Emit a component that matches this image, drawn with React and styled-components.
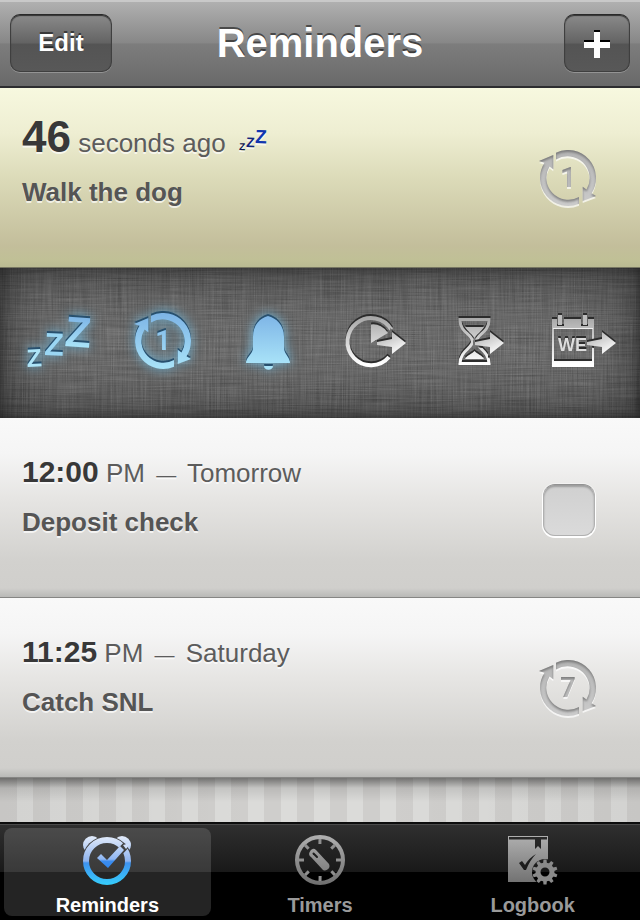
import styled, { createGlobalStyle, css } from "styled-components"

const GlobalStyle = createGlobalStyle`
  * {
    box-sizing: border-box;
  }
  body {
    margin: 0;
    background: #000;
    font-family: "Liberation Sans", Arial, Helvetica, sans-serif;
  }
  button {
    font: inherit;
    color: inherit;
    border: 0;
    padding: 0;
    background: none;
    cursor: pointer;
  }
  svg {
    display: block;
    overflow: visible;
  }
`

const Screen = styled.div`
  display: flex;
  flex-direction: column;
  min-height: 100vh;
`

const Header = styled.header`
  display: grid;
  grid-template-columns: 1fr auto 1fr;
  align-items: center;
  height: 88px;
  padding: 0 10px;
  border-bottom: 2px solid #2d2d2f;
  background: linear-gradient(#b2b2b2, #878787 50%, #7d7d7d 51%, #696969);
  box-shadow: inset 0 2px 0 #c9c9c9;
`

const Title = styled.h1`
  margin: 0;
  color: #fff;
  font-size: 40px;
  line-height: 48px;
  text-shadow: 0 -2px 0 rgba(0, 0, 0, 0.5);
`

const NavButton = styled.button`
  display: flex;
  align-items: center;
  justify-content: center;
  justify-self: ${(props) => (props.$end ? "end" : "start")};
  width: ${(props) => (props.$end ? 66 : 102)}px;
  height: 58px;
  border: 1px solid #3f3f3f;
  border-top-color: #2a2a2a;
  border-radius: 10px;
  background: linear-gradient(#8a8a8a, #636363 50%, #545454 52%, #585858);
  box-shadow:
    inset 0 1px 1px #333,
    0 1px 0 rgba(255, 255, 255, 0.25);
  color: #fff;
  font-size: 24px;
  font-weight: bold;
  text-shadow: 0 -2px 0 rgba(0, 0, 0, 0.5);
`

const List = styled.ul`
  margin: 0;
  padding: 0;
  list-style: none;
`

const Row = styled.div`
  display: flex;
  align-items: center;
  justify-content: space-between;
  min-height: 180px;
  padding: 0 36px 0 22px;
  background: linear-gradient(
    #f9f9f9,
    #f5f5f5 20%,
    #e6e5e3 45%,
    #d2d1ce 80%,
    #d0cfcc 95%,
    #b9b9b7
  );
  border-bottom: 1px solid #868684;
  ${(props) =>
    props.$due &&
    css`
      background: linear-gradient(
        #f7f8df,
        #eeeed2 25%,
        #dcdbb9 50%,
        #c3be9b 88%,
        #c0c096 96%,
        #babb92
      );
      border-bottom-color: #777762;
    `}
`

const RowText = styled.div`
  align-self: flex-start;
  padding-top: 23px;
  text-shadow: 0 2px 0 rgba(255, 255, 255, 0.7);
`

const When = styled.p`
  display: flex;
  height: 52px;
  margin: 0 0 14px;
  align-items: baseline;
  line-height: 52px;
  color: #5c5c5c;
  font-size: 26px;
  white-space: pre;

  /* keeps the same baseline whatever the size of the time */
  &::before {
    content: "\\200b";
    font-size: 44px;
  }
`

const Time = styled.b`
  color: #383838;
  font-size: ${(props) => (props.$big ? 44 : 30)}px;
`

const Dash = styled.span`
  padding: 0 4px;
  font-size: 20px;
`

const Snooze = styled.svg`
  margin-left: 12px;
  font-weight: bold;
`

const Name = styled.h2`
  margin: 0;
  color: #555;
  font-size: 26px;
  font-weight: bold;
  line-height: 30px;
`

const Side = styled.div`
  display: flex;
  justify-content: center;
  width: 72px;
`

const Count = styled.text`
  font-family: Roboto, "Liberation Sans", sans-serif;
  font-size: 27px;
  font-weight: bold;
  text-anchor: middle;
`

const Check = styled.input`
  appearance: none;
  width: 52px;
  height: 52px;
  margin: 4px 0 0 2px;
  border: 1px solid #b0b0b0;
  border-top-color: #929292;
  border-radius: 12px;
  background: linear-gradient(#d0d0d0, #dadada);
  box-shadow:
    inset 0 2px 2px rgba(0, 0, 0, 0.25),
    0 0 0 1px rgba(255, 255, 255, 0.4),
    0 1px 0 1px #fff;
`

const Toolbar = styled.div`
  position: relative;
  display: grid;
  grid-template-columns: repeat(6, 1fr);
  height: 150px;
  overflow: hidden;
  background: #666;
`

const Linen = styled.svg`
  position: absolute;
  inset: 0;
  width: 100%;
  height: 100%;
`

const Vignette = styled.div`
  position: absolute;
  inset: 0;
  box-shadow:
    inset 0 0 60px rgba(0, 0, 0, 0.6),
    inset 0 0 12px rgba(0, 0, 0, 0.4);
`

const Tool = styled.button`
  position: relative;
  display: flex;
  svg {
    filter: ${(props) =>
      props.$on
        ? "drop-shadow(0 -2px 0 #28506e) drop-shadow(0 0 6px rgba(110, 200, 245, 0.8))"
        : "drop-shadow(0 -2px 0 #2c2c2c)"};
  }
`

const Stripes = styled.div`
  flex: 1;
  min-height: 44px;
  background:
    linear-gradient(rgba(0, 0, 0, 0.45), rgba(0, 0, 0, 0.1) 10px, transparent 24px),
    linear-gradient(90deg, rgba(0, 0, 0, 0.04), transparent 40%, transparent 60%, rgba(0, 0, 0, 0.04)),
    repeating-linear-gradient(90deg, #cfcecc 0 17px, #dbdbd9 17px 33px);
`

const TabBar = styled.nav`
  display: grid;
  grid-template-columns: repeat(3, 1fr);
  gap: 6px;
  height: 98px;
  padding: 6px 4px 4px;
  background: linear-gradient(
    #0c0c0c 0 2px,
    #4a4a4a 2px 3px,
    #2f2f2f 3px,
    #191919 50px,
    #000 50px
  );
`

const Tab = styled.button`
  display: flex;
  flex-direction: column;
  align-items: center;
  gap: 3px;
  padding-top: 3px;
  border-radius: 8px;
  color: ${(props) => (props.$active ? "#fff" : "#9a9a9a")};
  background: ${(props) => (props.$active ? "rgba(255, 255, 255, 0.14)" : "none")};
  font-size: 20px;
  font-weight: bold;
  line-height: 22px;
`

const HiddenSvg = styled.svg`
  position: absolute;
`

const Defs = () => (
  <HiddenSvg width="0" height="0" aria-hidden="true">
    <defs>
      <linearGradient id="silver" gradientUnits="userSpaceOnUse" x1="0" y1="50" x2="0" y2="96">
        <stop offset="0" stopColor="#a8a8a8" />
        <stop offset="1" stopColor="#ffffff" />
      </linearGradient>
      <linearGradient id="arrowFill" gradientUnits="userSpaceOnUse" x1="-14" y1="-8" x2="-6" y2="10">
        <stop offset="0" stopColor="#c4c4c4" />
        <stop offset="1" stopColor="#ffffff" />
      </linearGradient>
      <linearGradient id="blue" gradientUnits="userSpaceOnUse" x1="0" y1="46" x2="0" y2="96">
        <stop offset="0" stopColor="#7db4e6" />
        <stop offset="1" stopColor="#a9e3f8" />
      </linearGradient>
      <linearGradient id="blueZ" gradientUnits="userSpaceOnUse" x1="0" y1="-31" x2="0" y2="0">
        <stop offset="0" stopColor="#7db4e6" />
        <stop offset="1" stopColor="#a9e3f8" />
      </linearGradient>
      <linearGradient id="blueRing" gradientUnits="userSpaceOnUse" x1="0" y1="-28" x2="0" y2="28">
        <stop offset="0" stopColor="#7db4e6" />
        <stop offset="1" stopColor="#a9e3f8" />
      </linearGradient>
      <linearGradient id="grayRing" gradientUnits="userSpaceOnUse" x1="0" y1="-28" x2="0" y2="28">
        <stop offset="0" stopColor="#b4b4b4" />
        <stop offset="1" stopColor="#cbcbcb" />
      </linearGradient>
      <linearGradient id="tabBlue" gradientUnits="userSpaceOnUse" x1="0" y1="6" x2="0" y2="54">
        <stop offset="0" stopColor="#dfe9fa" />
        <stop offset="0.5" stopColor="#8fb4ef" />
        <stop offset="0.54" stopColor="#3f93f0" />
        <stop offset="1" stopColor="#36cdfb" />
      </linearGradient>
      <linearGradient id="tabCheck" gradientUnits="userSpaceOnUse" x1="0" y1="12" x2="0" y2="38">
        <stop offset="0" stopColor="#cfdef8" />
        <stop offset="0.62" stopColor="#8fb6f2" />
        <stop offset="0.7" stopColor="#3b8df0" />
        <stop offset="1" stopColor="#2f86ee" />
      </linearGradient>
      <linearGradient id="tabGray" gradientUnits="userSpaceOnUse" x1="0" y1="4" x2="0" y2="56">
        <stop offset="0" stopColor="#b0b0b0" />
        <stop offset="1" stopColor="#6c6c6c" />
      </linearGradient>

      {/* pressed-in look: soft dark upper edge, light below */}
      <filter id="press" x="-20%" y="-20%" width="140%" height="140%" colorInterpolationFilters="sRGB">
        <feOffset in="SourceAlpha" dx="0" dy="2" result="down" />
        <feGaussianBlur in="down" stdDeviation="1" result="soft" />
        <feComposite in="SourceAlpha" in2="soft" operator="out" result="rim" />
        <feFlood floodColor="#555" floodOpacity="0.6" />
        <feComposite in2="rim" operator="in" result="line" />
        <feFlood floodColor="#fff" floodOpacity="0.7" />
        <feComposite in2="down" operator="in" result="light" />
        <feMerge>
          <feMergeNode in="light" />
          <feMergeNode in="SourceGraphic" />
          <feMergeNode in="line" />
        </feMerge>
      </filter>
      <filter id="linen" x="0" y="0" width="100%" height="100%" colorInterpolationFilters="sRGB">
        <feTurbulence type="fractalNoise" baseFrequency="0.02 0.8" numOctaves="2" seed="3" result="h" />
        <feTurbulence type="fractalNoise" baseFrequency="0.8 0.02" numOctaves="2" seed="8" result="v" />
        <feComposite in="h" in2="v" operator="arithmetic" k1="0" k2="0.5" k3="0.5" k4="0" />
        <feColorMatrix
          values="0.28 0 0 0 0.28
                  0.28 0 0 0 0.28
                  0.28 0 0 0 0.28
                  0 0 0 0 1"
        />
      </filter>
    </defs>
  </HiddenSvg>
)

const Loop = ({ children, fill }) => (
  <>
    <path
      d="M-12 -25.3A28 28 0 0 1 23.5 15.2L28 18L14.7 23V8.7L18.5 11.6A22 22 0 0 0 -12 -18.4Z"
      fill={fill}
    />
    <path
      d="M11 25.7A28 28 0 0 1 -23.5 -15.2L-29 -17L-14.7 -23V-8.7L-18.5 -11.6A22 22 0 0 0 11 19Z"
      fill={fill}
    />
    <Count x="0" y="9" fill={fill}>
      {children}
    </Count>
  </>
)

const RepeatIcon = ({ count }) => (
  <svg width="60" height="60" viewBox="-30 -30 60 60">
    <g filter="url(#press)">
      <Loop fill="url(#grayRing)">{count}</Loop>
    </g>
  </svg>
)

const SmallSnooze = () => (
  <Snooze width="30" height="22" viewBox="0 0 30 22" aria-hidden="true">
    <text fontSize="10" fill="#0d1750" transform="translate(1 20) rotate(2)">
      Z
    </text>
    <text fontSize="14" fill="#11257c" transform="translate(8 17) rotate(2)">
      Z
    </text>
    <text fontSize="19" fill="#1236ae" transform="translate(17 13) rotate(2)">
      Z
    </text>
  </Snooze>
)

const ToolSvg = ({ children }) => (
  <svg width="106" height="150" viewBox="0 0 106 150" aria-hidden="true">
    {children}
  </svg>
)

const SnoozeIcon = () => (
  <ToolSvg>
    <g fontWeight="bold">
      <text fontSize="25" fill="#aee4f7" transform="translate(27 99) rotate(-3)">
        Z
      </text>
      <text fontSize="32" fill="#9ad6f3" transform="translate(44 87) rotate(2)">
        Z
      </text>
      <text fontSize="43" fill="url(#blueZ)" transform="translate(64 78) rotate(4)">
        Z
      </text>
    </g>
  </ToolSvg>
)

const LoopIcon = () => (
  <ToolSvg>
    <g transform="translate(56 73)">
      <Loop fill="url(#blueRing)">1</Loop>
    </g>
  </ToolSvg>
)

const BellIcon = () => (
  <ToolSvg>
    <g fill="url(#blue)">
      <path d="M55 48C63 50 71 57 71 69V80C71 86 77 89 77 95H33C33 89 40 86 40 80V69C40 57 47 50 55 48Z" />
      <path d="M51 98H60C60 103 51 103 51 98Z" />
    </g>
  </ToolSvg>
)

const arrow = "M0 0L-14 -11V-4L-29 -1V2L-14 4V11Z"

const Arrow = ({ x }) => (
  <path d={arrow} transform={`translate(${x} 75)`} fill="url(#arrowFill)" />
)

// hides what lies right around the arrow
const ArrowMask = ({ id, x }) => (
  <mask id={id} maskUnits="userSpaceOnUse" x="0" y="0" width="106" height="150">
    <rect width="106" height="150" fill="#fff" />
    <path d={arrow} transform={`translate(${x} 75)`} fill="#000" stroke="#000" strokeWidth="4" />
  </mask>
)

const ClockIcon = () => (
  <ToolSvg>
    <ArrowMask id="clockMask" x={86} />
    <g mask="url(#clockMask)">
      <path d="M71.3 61.5A23.6 23.6 0 1 0 69 89" fill="none" stroke="url(#silver)" strokeWidth="4" />
      <path d="M51 56.5A17 17 0 0 1 68 65L51 75Z" fill="url(#silver)" />
    </g>
    <Arrow x={86} />
  </ToolSvg>
)

const HourglassIcon = () => (
  <ToolSvg>
    <ArrowMask id="glassMask" x={77} />
    <g mask="url(#glassMask)">
      <path
        d="M33 51.5H62C62 65 49.5 66 49.5 73.5C49.5 80 62 83 62 95.5H33C33 83 45.5 80 45.5 73.5C45.5 66 33 65 33 51.5Z"
        fill="none"
        stroke="url(#silver)"
        strokeWidth="3"
      />
      <path d="M38 59H57C54 64 50 66 47.5 70C45 66 41 64 38 59Z" fill="url(#silver)" />
      <path d="M38 91C40 87 45 86 47.5 83C50 86 55 87 57 91Z" fill="url(#silver)" />
    </g>
    <Arrow x={77} />
  </ToolSvg>
)

const CalendarIcon = () => (
  <ToolSvg>
    <ArrowMask id="calMask" x={83} />
    <g mask="url(#calMask)">
      <path
        d="M19 51H24V58H31V51H48V58H55V51H61V99H19ZM21 61V93H59V61Z"
        fill="url(#silver)"
        fillRule="evenodd"
      />
      <rect x="25" y="47" width="4" height="10" fill="#bdbdbd" />
      <rect x="50" y="47" width="4" height="10" fill="#bdbdbd" />
      <path d="M20 60.5H60" stroke="#eee" />
      <text x="25" y="83" fill="#ddd" fontSize="18" fontWeight="bold">
        WE
      </text>
    </g>
    <Arrow x={83} />
  </ToolSvg>
)

const TabSvg = ({ children }) => (
  <svg width="60" height="60" viewBox="0 0 60 60" aria-hidden="true">
    {children}
  </svg>
)

const AlarmIcon = () => (
  <TabSvg>
    <mask id="ears" maskUnits="userSpaceOnUse" x="0" y="0" width="60" height="60">
      <rect width="60" height="60" fill="#fff" />
      <circle cx="30" cy="30" r="25" fill="#000" />
    </mask>
    <mask id="face" maskUnits="userSpaceOnUse" x="0" y="0" width="60" height="60">
      <rect width="60" height="60" fill="#fff" />
      <path d="M36 28L54 9" stroke="#000" strokeWidth="7" />
    </mask>
    <g mask="url(#ears)" fill="url(#tabBlue)">
      <circle cx="15" cy="14" r="9" />
      <circle cx="45" cy="14" r="9" />
    </g>
    <circle cx="30" cy="30" r="21" fill="none" stroke="url(#tabBlue)" strokeWidth="6" mask="url(#face)" />
    <path d="M24 23L30 29L43 15L47 19L31 37L20 27Z" fill="url(#tabCheck)" />
    <path d="M46 14L54 12L49 18Z" fill="#cfdef8" />
  </TabSvg>
)

const TimerIcon = () => (
  <TabSvg>
    <g stroke="url(#tabGray)">
      <circle cx="30" cy="29" r="23" fill="none" strokeWidth="4" />
      {[0, 45, 90, 135, 180, 225, 270, 315].map((angle) => (
        <path key={angle} d="M46 28.9L51 29" strokeWidth="3" transform={`rotate(${angle} 30 29)`} />
      ))}
    </g>
    <path
      d="M20 20.5A3.5 3.5 0 0 1 26 19L39 33A4.5 4.5 0 0 1 33 39L21 26A3.5 3.5 0 0 1 20 20.5Z"
      fill="url(#tabGray)"
    />
    <path d="M23.5 22.5L27 26" stroke="#1c1c1c" strokeWidth="2" strokeLinecap="round" />
  </TabSvg>
)

const LogbookIcon = () => (
  <TabSvg>
    <mask id="book" maskUnits="userSpaceOnUse" x="0" y="0" width="60" height="60">
      <rect width="60" height="60" fill="#fff" />
      <path d="M6 6H44V8.5H38V18L35 15L32 18V8.5H6Z" fill="#000" />
      <path d="M16 32L19 30L22 34Q26 27 33 23Q27 29 23 39H21Z" fill="#000" />
      <circle cx="42" cy="41" r="13" fill="#000" />
    </mask>
    <rect x="5" y="5" width="40" height="46" fill="url(#tabGray)" mask="url(#book)" />
    <circle cx="42" cy="41" r="7" fill="none" stroke="#8a8a8a" strokeWidth="5" />
    {[0, 36, 72, 108, 144, 180, 216, 252, 288, 324].map((angle) => (
      <path
        key={angle}
        d="M40.5 28.5H43.5L44 33H40Z"
        fill="#8a8a8a"
        transform={`rotate(${angle} 42 41)`}
      />
    ))}
  </TabSvg>
)

const tools = [
  { label: "Snooze", icon: <SnoozeIcon />, on: true },
  { label: "Repeat", icon: <LoopIcon />, on: true },
  { label: "Alert", icon: <BellIcon />, on: true },
  { label: "Change time", icon: <ClockIcon /> },
  { label: "Postpone", icon: <HourglassIcon /> },
  { label: "Change day", icon: <CalendarIcon /> },
]

const tabs = [
  { label: "Reminders", icon: <AlarmIcon />, active: true },
  { label: "Timers", icon: <TimerIcon /> },
  { label: "Logbook", icon: <LogbookIcon /> },
]

const App = () => {
  return (
    <Screen>
      <GlobalStyle />
      <Defs />
      <Header>
        <NavButton>Edit</NavButton>
        <Title>Reminders</Title>
        <NavButton $end aria-label="Add">
          <svg width="26" height="30" viewBox="0 0 26 30">
            <path d="M0 12H10V2H16V12H26V18H16V28H10V18H0Z" fill="#000" />
            <path d="M0 14H10V4H16V14H26V20H16V30H10V20H0Z" fill="#fff" />
          </svg>
        </NavButton>
      </Header>
      <List>
        <li>
          <Row $due>
            <RowText>
              <When>
                <Time $big>46</Time>
                <span> seconds ago</span>
                <SmallSnooze />
              </When>
              <Name>Walk the dog</Name>
            </RowText>
            <Side>
              <RepeatIcon count="1" />
            </Side>
          </Row>
          <Toolbar>
            <Linen aria-hidden="true">
              <rect width="100%" height="100%" filter="url(#linen)" />
            </Linen>
            <Vignette />
            {tools.map((tool) => (
              <Tool key={tool.label} $on={tool.on} aria-label={tool.label}>
                {tool.icon}
              </Tool>
            ))}
          </Toolbar>
        </li>
        <li>
          <Row>
            <RowText>
              <When>
                <Time>12:00</Time>
                <span> PM </span>
                <Dash>—</Dash>
                <span> Tomorrow</span>
              </When>
              <Name as="label" htmlFor="deposit">
                Deposit check
              </Name>
            </RowText>
            <Side>
              <Check type="checkbox" id="deposit" />
            </Side>
          </Row>
        </li>
        <li>
          <Row>
            <RowText>
              <When>
                <Time>11:25</Time>
                <span> PM </span>
                <Dash>—</Dash>
                <span> Saturday</span>
              </When>
              <Name>Catch SNL</Name>
            </RowText>
            <Side>
              <RepeatIcon count="7" />
            </Side>
          </Row>
        </li>
      </List>
      <Stripes />
      <TabBar>
        {tabs.map((tab) => (
          <Tab key={tab.label} $active={tab.active}>
            {tab.icon}
            {tab.label}
          </Tab>
        ))}
      </TabBar>
    </Screen>
  )
}

export default App
